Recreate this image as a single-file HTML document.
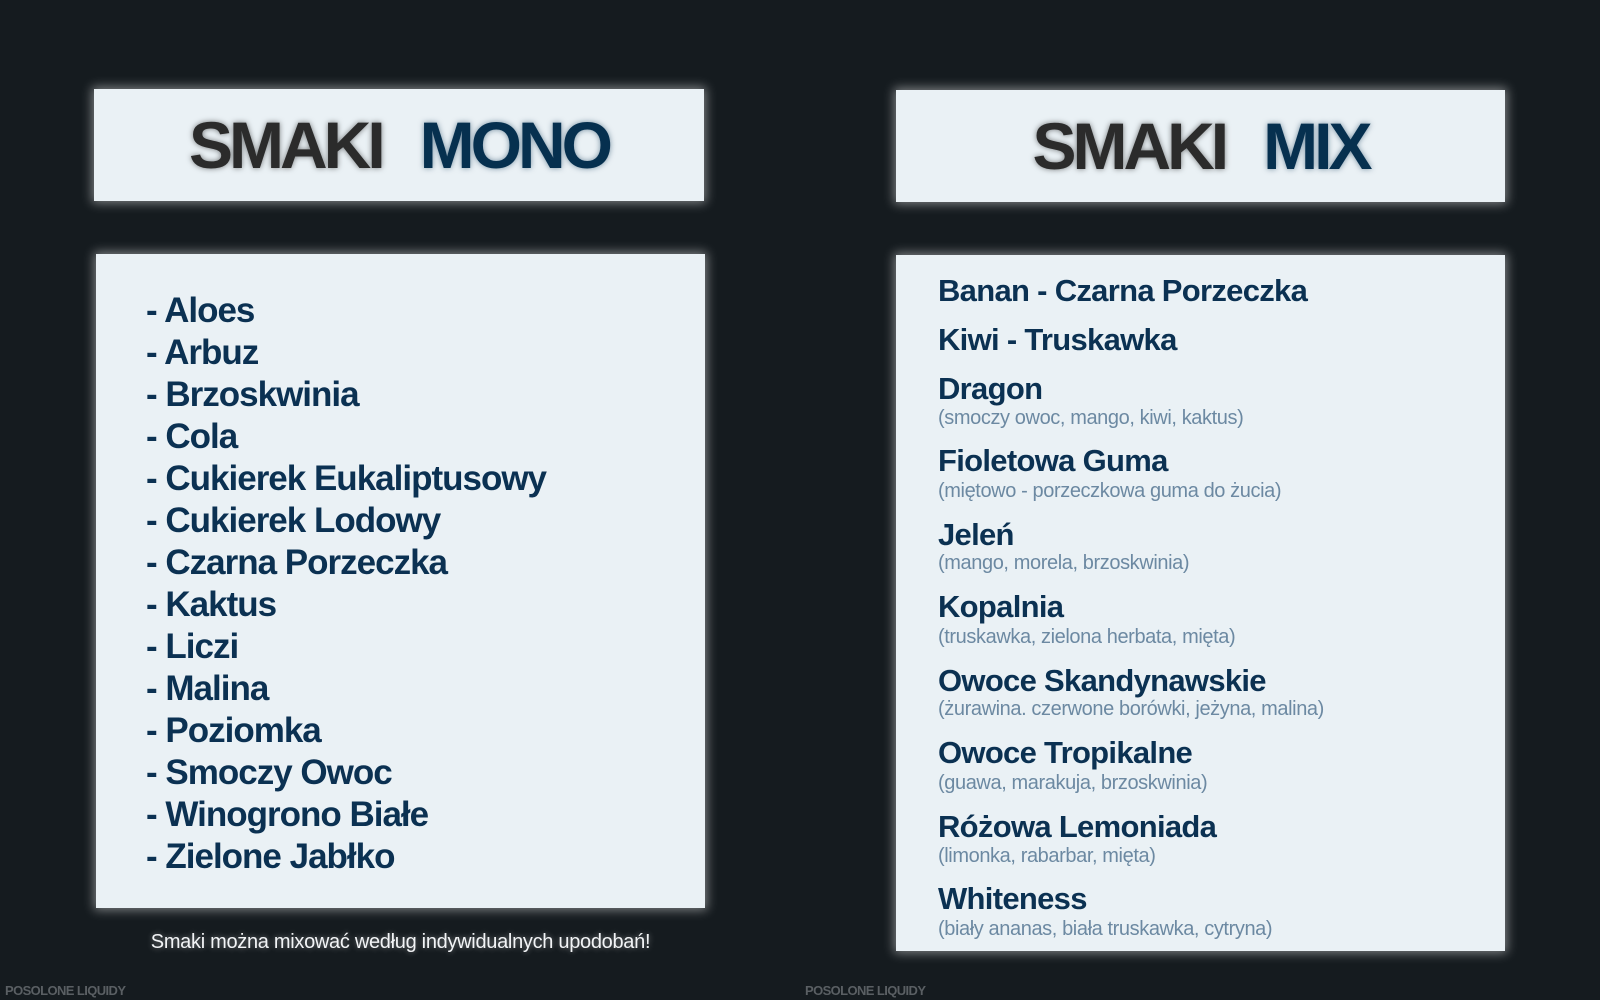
<!DOCTYPE html>
<html><head><meta charset="utf-8"><style>
html,body{margin:0;padding:0}
body{width:1600px;height:1000px;background:#151b1f;position:relative;overflow:hidden;font-family:"Liberation Sans",sans-serif}
.box{position:absolute;background:#eaf1f5;box-shadow:0 0 10px 2px rgba(255,255,255,.45)}
.title{position:absolute;left:0;right:0;top:0;bottom:0;display:flex;align-items:center;justify-content:center;font-size:66px;font-weight:bold;letter-spacing:-4px}
.title .a{color:#2b2b2b;text-shadow:0 0 6px rgba(0,0,0,.5);margin-right:38px}
.title .b{color:#06304f;text-shadow:0 0 6px rgba(6,48,79,.5)}
.t{position:absolute;white-space:nowrap;color:#0b3152;font-weight:bold}
.l{font-size:35px;letter-spacing:-1.0px;line-height:42px;left:146px}
.m{font-size:31px;letter-spacing:-0.7px;line-height:36px;left:938px}
.s{position:absolute;white-space:nowrap;color:#6c89a2;font-size:20px;letter-spacing:-0.4px;line-height:22px;left:938px}
.ft{position:absolute;color:#5a5f63;font-weight:bold;font-size:13px;letter-spacing:-0.6px;top:983px}
</style></head><body>
<div class="box" style="left:94px;top:89px;width:610px;height:112px"><div class="title"><span class="a">SMAKI</span><span class="b">MONO</span></div></div>
<div class="box" style="left:896px;top:90px;width:609px;height:112px"><div class="title"><span class="a">SMAKI</span><span class="b">MIX</span></div></div>
<div class="box" style="left:96px;top:254px;width:609px;height:654px"></div>
<div class="box" style="left:896px;top:255px;width:609px;height:696px"></div>

<div class="t l" style="top:290px">- Aloes</div>
<div class="t l" style="top:332px">- Arbuz</div>
<div class="t l" style="top:374px">- Brzoskwinia</div>
<div class="t l" style="top:416px">- Cola</div>
<div class="t l" style="top:458px">- Cukierek Eukaliptusowy</div>
<div class="t l" style="top:500px">- Cukierek Lodowy</div>
<div class="t l" style="top:542px">- Czarna Porzeczka</div>
<div class="t l" style="top:584px">- Kaktus</div>
<div class="t l" style="top:626px">- Liczi</div>
<div class="t l" style="top:668px">- Malina</div>
<div class="t l" style="top:710px">- Poziomka</div>
<div class="t l" style="top:752px">- Smoczy Owoc</div>
<div class="t l" style="top:794px">- Winogrono Białe</div>
<div class="t l" style="top:836px">- Zielone Jabłko</div>

<div class="t m" style="top:273px">Banan - Czarna Porzeczka</div>
<div class="t m" style="top:322px">Kiwi - Truskawka</div>
<div class="t m" style="top:371px">Dragon</div>
<div class="s" style="top:407px">(smoczy owoc, mango, kiwi, kaktus)</div>
<div class="t m" style="top:443px">Fioletowa Guma</div>
<div class="s" style="top:480px">(miętowo - porzeczkowa guma do żucia)</div>
<div class="t m" style="top:517px">Jeleń</div>
<div class="s" style="top:552px">(mango, morela, brzoskwinia)</div>
<div class="t m" style="top:589px">Kopalnia</div>
<div class="s" style="top:626px">(truskawka, zielona herbata, mięta)</div>
<div class="t m" style="top:663px">Owoce Skandynawskie</div>
<div class="s" style="top:698px">(żurawina. czerwone borówki, jeżyna, malina)</div>
<div class="t m" style="top:735px">Owoce Tropikalne</div>
<div class="s" style="top:772px">(guawa, marakuja, brzoskwinia)</div>
<div class="t m" style="top:809px">Różowa Lemoniada</div>
<div class="s" style="top:845px">(limonka, rabarbar, mięta)</div>
<div class="t m" style="top:881px">Whiteness</div>
<div class="s" style="top:918px">(biały ananas, biała truskawka, cytryna)</div>

<div style="position:absolute;left:96px;width:609px;top:931px;text-align:center;color:#f2f4f6;font-size:20px;letter-spacing:-0.3px;text-shadow:0 0 6px rgba(255,255,255,.45)">Smaki można mixować według indywidualnych upodobań!</div>
<div class="ft" style="left:5px">POSOLONE LIQUIDY</div>
<div class="ft" style="left:805px">POSOLONE LIQUIDY</div>
</body></html>
